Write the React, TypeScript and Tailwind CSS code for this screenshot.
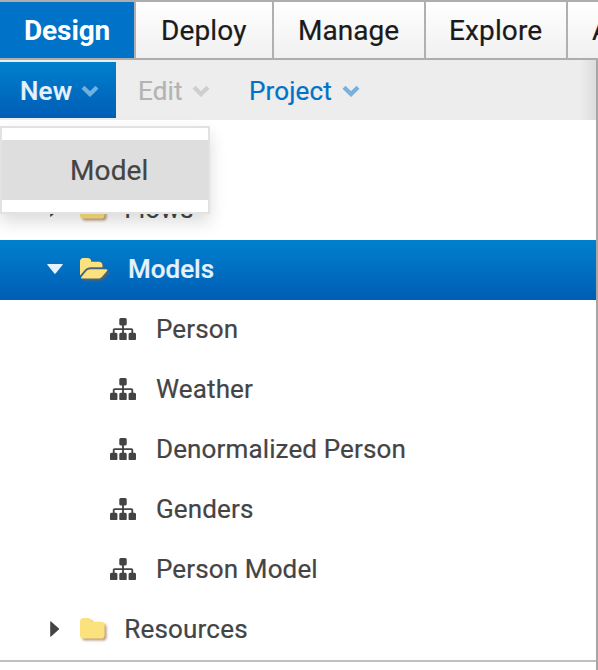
const SITEMAP =
  'M1792 1248v320q0 40-28 68t-68 28h-320q-40 0-68-28t-28-68v-320q0-40 28-68t68-28h96v-192h-512v192h96q40 0 68 28t28 68v320q0 40-28 68t-68 28h-320q-40 0-68-28t-28-68v-320q0-40 28-68t68-28h96v-192h-512v192h96q40 0 68 28t28 68v320q0 40-28 68t-68 28h-320q-40 0-68-28t-28-68v-320q0-40 28-68t68-28h96v-192q0-52 38-90t90-38h512v-192h-96q-40 0-68-28t-28-68v-320q0-40 28-68t68-28h320q40 0 68 28t28 68v320q0 40-28 68t-68 28h-96v192h512q52 0 90 38t38 90v192h96q40 0 68 28t28 68z';
const FOLDER =
  'M1728 608v704q0 92-66 158t-158 66h-1216q-92 0-158-66t-66-158v-960q0-92 66-158t158-66h320q92 0 158 66t66 158v32h672q92 0 158 66t66 158z';
const FOLDER_OPEN =
  'M1879 952q0 31-31 66l-336 396q-43 51-120.5 86.5t-143.5 35.5h-1088q-34 0-60.5-13t-26.5-43q0-31 31-66l336-396q43-51 120.5-86.5t143.5-35.5h1088q34 0 60.5 13t26.5 43zm-343-344v160h-832q-94 0-197 47.5t-164 119.5l-337 396-5 6q0-4-.5-12.5t-.5-12.5v-960q0-92 66-158t158-66h320q92 0 158 66t66 158v32h544q92 0 158 66t66 158z';

function Chevron({ className }: { className: string }) {
  return (
    <svg viewBox="0 0 18 12" className={`mt-0.5 h-3 w-[18px] shrink-0 ${className}`}>
      <path d="M2 2.2 9 9.1 16 2.2" fill="none" stroke="currentColor" strokeWidth="4.2" />
    </svg>
  );
}

function Tab({ label, className }: { label: string; className: string }) {
  return (
    <div className={`h-14 shrink-0 border-r-2 border-[#b0b0b0] text-[28px] leading-[57px] ${className}`}>
      {label}
    </div>
  );
}

function Folder({ open = false }: { open?: boolean }) {
  return (
    <svg
      viewBox={open ? '0 128 1920 1408' : '64 128 1664 1408'}
      preserveAspectRatio="none"
      className={`h-[20.6px] shrink-0 fill-[#fce27c] drop-shadow-[2px_2px_1px_rgba(150,90,50,0.6)] ${open ? 'w-7' : 'w-[24.6px]'}`}
    >
      <path d={open ? FOLDER_OPEN : FOLDER} />
    </svg>
  );
}

function ClosedRow({ label }: { label: string }) {
  return (
    <div className="flex h-[60px] items-center pl-[50px]">
      <svg viewBox="0 0 9 16" className="mt-[-3px] h-4 w-[9.4px] fill-[#444]">
        <path d="M0 .8Q0-.3.9.5L8.7 7.4Q9.3 8 8.7 8.6L.9 15.5Q0 16.3 0 15.2Z" />
      </svg>
      <div className="mt-[-3.4px] ml-[20.6px] flex">
        <Folder />
      </div>
      <span className="mt-[-2px] ml-[19.6px] tracking-[0.2px]">{label}</span>
    </div>
  );
}

function ModelRow({ label }: { label: string }) {
  return (
    <div className="flex h-[60px] items-center pl-[110px]">
      <svg viewBox="0 128 1792 1536" className="mt-[-2.3px] h-[22.3px] w-[26px] fill-[#444]">
        <path d={SITEMAP} />
      </svg>
      <span className="mt-[-2px] ml-5">{label}</span>
    </div>
  );
}

export default function App() {
  return (
    <div className="relative h-[670px] w-[598px] overflow-hidden bg-white font-['Roboto','Liberation_Sans',sans-serif] text-[26px] tracking-[0.13px] whitespace-nowrap text-[#444] [-webkit-text-stroke:0.22px_currentColor]">
      <nav className="flex h-[60px] overflow-hidden border-y-2 border-[#adadad] bg-linear-to-b from-white to-[#f0f0f0] text-[#1a1a1a]">
        <Tab label="Design" className="w-[136px] bg-[#0073c8] pl-6 font-bold tracking-[-0.1px] text-white [-webkit-text-stroke:0px]" />
        <Tab label="Deploy" className="w-[138px] pl-[25px]" />
        <Tab label="Manage" className="w-[152px] pl-6 tracking-[0.05px]" />
        <Tab label="Explore" className="w-[142px] pl-[23px]" />
        <Tab label="A" className="w-[120px] pl-6" />
      </nav>
      <div className="h-[610px] border-r-2 border-[#a6a6a6]">
        <div className="flex h-[60px] bg-[#ededed]">
          <div className="mt-0.5 flex h-14 w-[116px] items-center bg-linear-to-b from-[#0080cd] to-[#005db6] pl-5 font-medium text-[#e5f2fb]">
            <span className="mt-0.5 w-[61px]">New</span>
            <Chevron className="text-[#72b0e0]" />
          </div>
          <div className="flex items-center pl-[22px] text-[#b3b3b3]">
            <span className="mt-0.5 w-[54px]">Edit</span>
            <Chevron className="text-[#cecece]" />
          </div>
          <div className="flex items-center pl-[39px] text-[#0073c8]">
            <span className="mt-0.5 w-[93px]">Project</span>
            <Chevron className="text-[#79b0dc]" />
          </div>
          <div className="ml-auto w-4 bg-linear-to-r from-[#ededed] to-[#dcdcdc]" />
        </div>
        <div className="h-[60px]" />
        <ClosedRow label="Flows" />
        <div className="flex h-[60px] items-center bg-linear-to-b from-[#0080cd] to-[#005db6] pl-[47px] font-medium text-[#e5f2fb]">
          <svg viewBox="0 0 16 10" className="mt-[-2px] h-2.5 w-4 fill-current">
            <path d="M.8 0H15.2Q16.3 0 15.5.9L8.6 9.5Q8 10.2 7.4 9.5L.5.9Q-.3 0 .8 0Z" />
          </svg>
          <div className="mt-[-3.4px] ml-[17px] flex">
            <Folder open />
          </div>
          <span className="mt-[-2px] ml-5 tracking-normal">Models</span>
        </div>
        <ModelRow label="Person" />
        <ModelRow label="Weather" />
        <ModelRow label="Denormalized Person" />
        <ModelRow label="Genders" />
        <ModelRow label="Person Model" />
        <ClosedRow label="Resources" />
        <div className="h-0.5 bg-[#c0c0c0]" />
      </div>
      <div className="absolute top-[126px] left-0 h-[88px] w-[210px] border-2 border-[#e2e2e2] bg-white py-3 shadow-[0_8px_16px_rgba(0,0,0,0.14)]">
        <div className="h-[60px] bg-[#dedede] pl-[68px] text-[28px] leading-[62px]">Model</div>
      </div>
    </div>
  );
}
